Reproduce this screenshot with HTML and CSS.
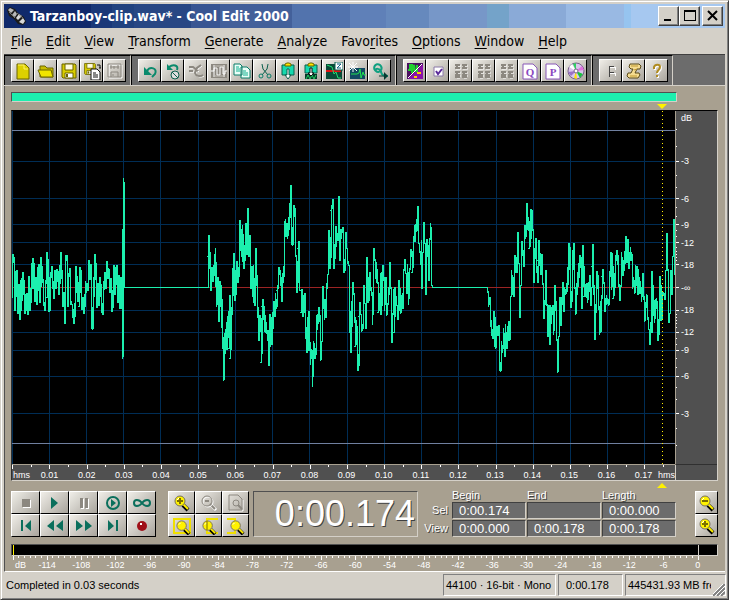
FILE: index.html
```html
<!DOCTYPE html>
<html lang="en">
<head>
  <meta charset="UTF-8" />
  <meta name="viewport" content="width=device-width, initial-scale=1" />
  <title>Tarzanboy-clip.wav* - Cool Edit 2000</title>
  <link rel="stylesheet" href="styles.css">
</head>
<body>

<!-- Shared shapes -->
<svg class="defs" width="0" height="0" aria-hidden="true">
  <symbol id="lens" viewBox="0 0 18 18">
    <path d="M10 11l5 5" stroke="#000" stroke-width="4"/>
    <path d="M10 10l5 5" stroke="#ffef00" stroke-width="2"/>
    <circle cx="7" cy="7" r="5" fill="#fff200" stroke="#777060" stroke-width="1"/>
    <path d="M4 6l2-2" stroke="#fff"/>
  </symbol>
  <symbol id="lens-off" viewBox="0 0 18 18">
    <path d="M11 11l5 5" stroke="#fff" stroke-width="3"/>
    <path d="M10 10l5 5" stroke="#8c8880" stroke-width="2"/>
    <circle cx="8" cy="8" r="5" fill="none" stroke="#fff"/>
    <circle cx="7" cy="7" r="5" fill="none" stroke="#8c8880"/>
  </symbol>
  <symbol id="grid-off" viewBox="0 0 18 18">
    <path d="M3 3h5M10 3h5M3 6h5M10 6h5M3 10h5M10 10h5M3 13h5M10 13h5M4 15h3M11 15h3" stroke="#fff" transform="translate(1 1)"/>
    <path d="M3 3h5M10 3h5M3 6h5M10 6h5M3 10h5M10 10h5M3 13h5M10 13h5M5 2v5M12 2v5M5 9v6M12 9v6M3 15h5M10 15h5" stroke="#8c8880" stroke-width="2"/>
  </symbol>
  <symbol id="floppy" viewBox="0 0 18 18">
    <path d="M2 2h13l1 1v13H3l-1-1z" fill="#d8cc00" stroke="#6b6500"/>
    <path d="M5 2h8v6H5z" fill="#fffce0" stroke="#6b6500"/>
    <path d="M5 11h8v5H5z" fill="#fff" stroke="#6b6500"/>
    <path d="M6 12h2v3H6z" fill="#6b6500"/>
  </symbol>
</svg>

<div class="window">

<!-- Title bar -->
<header class="titlebar">
  <svg class="app-icon" viewBox="0 0 20 20" aria-hidden="true">
    <path d="M1 4l3-3 5 2 3 4 6 4 2 5-3 3-5-1-4-5-5-3z" fill="#1c1c1c"/>
    <path d="M2 4l2-2 4 2-3 3zM6 9l3-4 2 3-2 3z" fill="#b8b8b8"/>
    <path d="M10 12l3-4 3 2-4 4zM13 16l4-4 2 3-2 3z" fill="#d8d8d8"/>
    <path d="M3 6l6 6M11 7l6 5" stroke="#777"/>
  </svg>
  <h1>Tarzanboy-clip.wav* - Cool Edit 2000</h1>
  <div class="window-buttons">
    <button aria-label="Minimize"><svg viewBox="0 0 16 14"><path d="M3 10h7v2H3z"/></svg></button>
    <button aria-label="Maximize"><svg viewBox="0 0 16 14"><path d="M2 1h12v11H2zM3 3v8h10V3z" fill-rule="evenodd"/></svg></button>
    <button class="close" aria-label="Close"><svg viewBox="0 0 16 14"><path d="M3 2l9 9M12 2l-9 9" stroke="#000" stroke-width="2"/></svg></button>
  </div>
</header>

<!-- Menu -->
<nav class="menu">
  <a href="#"><u>F</u>ile</a>
  <a href="#"><u>E</u>dit</a>
  <a href="#"><u>V</u>iew</a>
  <a href="#"><u>T</u>ransform</a>
  <a href="#"><u>G</u>enerate</a>
  <a href="#"><u>A</u>nalyze</a>
  <a href="#">Favo<u>r</u>ites</a>
  <a href="#"><u>O</u>ptions</a>
  <a href="#"><u>W</u>indow</a>
  <a href="#"><u>H</u>elp</a>
</nav>

<!-- Toolbars -->
<div class="toolbars">
  <div class="toolbar">
    <button aria-label="New"><svg viewBox="0 0 18 18"><path d="M3 2h8l4 4v11H3z" fill="#ddd000" stroke="#6b6500"/><path d="M4 3h6v4h4" fill="none" stroke="#fff36b"/></svg></button>
    <button aria-label="Open"><svg viewBox="0 0 18 18"><path d="M3 15V4h5l2 2h6v9z" fill="#c9bd00" stroke="#6b6500"/><path d="M1 8h13l2 7H4z" fill="#f0e400" stroke="#6b6500"/></svg></button>
    <button aria-label="Save"><svg viewBox="0 0 18 18"><use href="#floppy"/></svg></button>
    <button aria-label="Save copy"><svg viewBox="0 0 18 18"><use href="#floppy" width="14" height="14"/><path d="M8 7h6l3 3v8H8z" fill="#fff" stroke="#111"/><path d="M10 11h3M10 13h5M10 15h5" stroke="#111"/><path d="M14 3h3v3M16 6h2" fill="none" stroke="#111"/></svg></button>
    <button aria-label="Save selection" disabled><svg viewBox="0 0 18 18"><path d="M3 3h13v13H3z" fill="none" stroke="#fff"/><path d="M2 2h13v13H2zM5 15v-5h7v5M4 5h9M5 3v4M8 4v3M12 3v4M7 12v2" fill="none" stroke="#8c8880"/></svg></button>
  </div>
  <div class="toolbar">
    <button aria-label="Undo"><svg viewBox="0 0 18 18"><path d="M6 9c3-5 11-3 8 3l-3 3" fill="none" stroke="#0a8a6c" stroke-width="2"/><path d="M3 5v8h8z" fill="#0a8a6c"/></svg></button>
    <button aria-label="Disable undo"><svg viewBox="0 0 18 18"><path d="M5 5c4-3 10-2 8 3" fill="none" stroke="#0a8a6c" stroke-width="2"/><path d="M3 2v6h6z" fill="#0a8a6c"/><circle cx="11" cy="13" r="4" fill="#ddd" stroke="#0b5f4c"/><path d="M8 10l6 6" stroke="#0b5f4c"/></svg></button>
    <button aria-label="Repeat last command" disabled><svg viewBox="0 0 18 18"><path d="M2 5h4l5 4M2 9h4M14 3l-4 3-2 5c1 3 5 4 8 2" fill="none" stroke="#fff" transform="translate(1 1)"/><path d="M2 5h4l5 4M2 9h4M14 3l-4 3-2 5c1 3 5 4 8 2" fill="none" stroke="#8c8880" stroke-width="2"/></svg></button>
    <button aria-label="Trim" disabled><svg viewBox="0 0 18 18"><path d="M1 2h16v14H1z" fill="#8c8880"/><path d="M1 9h3V6h3v7h3V5h3v7h2V9h2M4 3v12M14 3v12" fill="none" stroke="#fff"/><path d="M5 4h9M5 14h9" fill="none" stroke="#c8c4bc"/></svg></button>
    <button aria-label="Copy"><svg viewBox="0 0 18 18"><path d="M1 2h6l2 2v9H1zM8 5h6l3 3v8H8z" fill="#eafff8" stroke="#0a7d68"/><path d="M3 5h3M3 7h4M3 9h4M10 9h3M10 11h5M10 13h5" stroke="#10b090"/></svg></button>
    <button aria-label="Cut"><svg viewBox="0 0 18 18"><path d="M6 2l1 5 5 6M12 2l-1 5-5 6" fill="none" stroke="#0b5f4c"/><circle cx="5" cy="14" r="2" fill="none" stroke="#0a7d68"/><circle cx="13" cy="14" r="2" fill="none" stroke="#0a7d68"/></svg></button>
    <button aria-label="Paste"><svg viewBox="0 0 18 18"><path d="M3 3h12v10H3z" fill="#15d9ae" stroke="#0b5f4c"/><path d="M6 4V2l2-1h2l2 1v2z" fill="#ffe600" stroke="#6b6500"/><path d="M8 7h2v6h2l-3 4-3-4h2z" fill="#fff" stroke="#0b5f4c"/></svg></button>
    <button aria-label="Paste to new"><svg viewBox="0 0 18 18"><path d="M3 3h12v8H3z" fill="#15d9ae" stroke="#0b5f4c"/><path d="M6 4V2l2-1h2l2 1v2z" fill="#ffe600" stroke="#6b6500"/><path d="M3 12h12v5H3z" fill="#06382b"/><path d="M4 17l2-4 2 4 2-4 2 4 2-4" fill="none" stroke="#20d060"/><path d="M8 6h2v5h2l-3 3-3-3h2z" fill="#fff" stroke="#111"/></svg></button>
    <button aria-label="Zero crossing"><svg viewBox="0 0 18 18"><path d="M1 2h16v15H1z" fill="#0b4a38"/><path d="M1 9h15" stroke="#e01010" stroke-width="2"/><path d="M2 3l5 2 2 7 2-2 2 6h3" fill="none" stroke="#20e070"/><path d="M10 0h8v8h-8z" fill="#fff" stroke="#0b5f4c"/><path d="M12 2h4l-4 4h4" fill="none" stroke="#106080"/></svg></button>
    <button aria-label="Find beats"><svg viewBox="0 0 18 18"><path d="M2 6h15v11H2z" fill="#124a62"/><path d="M3 12h6l2-1 1-4 1 9 2-6 1 3h2" fill="none" stroke="#20e050"/><path d="M5 0v10M0 5h10M1 1l8 8M9 1L1 9" stroke="#fff"/></svg></button>
    <button aria-label="Convert sample type"><svg viewBox="0 0 18 18"><path d="M6 10c-6-4-1-10 3-7 4 4-1 9-4 6-2-3 5-3 5 1 1 4 4 4 7 4" fill="none" stroke="#10a080" stroke-width="2"/><path d="M8 14h6" stroke="#063a30"/><path d="M13 10l4 4-4 4z" fill="#063a30"/></svg></button>
  </div>
  <div class="toolbar">
    <button aria-label="Toggle spectral view"><svg viewBox="0 0 18 18"><path d="M1 1h16v16H1z" fill="#4a1060"/><path d="M17 2v15H2z" fill="#8a14a8"/><path d="M2 8h2V3h2v8l2-8 1 6h2V3" fill="none" stroke="#20d030" stroke-width="2"/><path d="M2 16L16 2" stroke="#fff"/><path d="M8 15h3M11 11h4" stroke="#ffd000" stroke-width="2"/></svg></button>
    <button aria-label="Settings"><svg viewBox="0 0 18 18"><path d="M5 5h9v9H5z" fill="#fff" stroke="#8a78a8"/><path d="M7 9l2 3 4-5" fill="none" stroke="#5a2a9a" stroke-width="2"/></svg></button>
    <button aria-label="Mixers" disabled><svg viewBox="0 0 18 18"><use href="#grid-off"/></svg></button>
    <button aria-label="Levels" disabled><svg viewBox="0 0 18 18"><use href="#grid-off"/></svg></button>
    <button aria-label="Synth" disabled><svg viewBox="0 0 18 18"><use href="#grid-off"/></svg></button>
    <button aria-label="Cue list"><svg viewBox="0 0 18 18"><path d="M2 2h10l4 4v11H2z" fill="#fff" stroke="#8a58b8"/><text x="9" y="14" class="glyph">Q</text></svg></button>
    <button aria-label="Play list"><svg viewBox="0 0 18 18"><path d="M2 2h10l4 4v11H2z" fill="#fff" stroke="#8a58b8"/><text x="9" y="14" class="glyph">P</text></svg></button>
    <button aria-label="CD player"><svg viewBox="0 0 18 18"><circle cx="9" cy="9" r="8" fill="#d9c4ec" stroke="#77608a"/><path d="M9 9L2 5l3-3z" fill="#fff"/><path d="M9 9l7 3-3 4z" fill="#18c040"/><path d="M9 9l6-5 2 4z" fill="#e070e0"/><path d="M9 9l1 8-3-1z" fill="#ffe600"/><path d="M9 9l-8 1 3 4z" fill="#9a70c8"/><path d="M9 9l-3-7 3-1z" fill="#30d060"/><circle cx="9" cy="9" r="2" fill="#fff" stroke="#77608a"/></svg></button>
  </div>
  <div class="toolbar">
    <button aria-label="Frequency analysis"><svg viewBox="0 0 18 18" shape-rendering="crispEdges"><path d="M8 5h5v3M8 11h5v3" fill="none" stroke="#fff"/><path d="M7 15V4h5M7 10h5" fill="none" stroke="#444"/></svg></button>
    <button aria-label="Scripts"><svg viewBox="0 0 18 18"><path d="M5 2h9l2 2-1 3h-3l-2 4h4l1 2-2 3H4l-2-2 1-3h3l2-4H6L4 5z" fill="#f5dc90" stroke="#5a4a18"/><path d="M6 4h7M5 14h7M9 8l3-1" stroke="#c09a30"/></svg></button>
    <button aria-label="Help"><svg viewBox="0 0 18 18"><path d="M6 7V5c1-3 6-3 6 0 0 3-3 3-3 6M9 13v2" fill="none" stroke="#fff" stroke-width="2" transform="translate(1 1)"/><path d="M6 7V5c1-3 6-3 6 0 0 3-3 3-3 6M9 13v2" fill="none" stroke="#b08c20" stroke-width="2"/></svg></button>
  </div>
</div>

<main>
  <div class="overview"><div class="overview-bar"></div></div>

  <!-- Waveform -->
  <section class="wave">
    <svg class="plot" viewBox="36 -147 1989 1059" preserveAspectRatio="none" role="img" aria-label="Waveform">
      <path class="grid" d="M38 -147V912M149 -147V912M260 -147V912M371 -147V912M482 -147V912M596 -147V912M707 -147V912M818 -147V912M929 -147V912M1043 -147V912M1154 -147V912M1265 -147V912M1376 -147V912M1490 -147V912M1601 -147V912M1712 -147V912M1823 -147V912M1934 -147V912"/>
      <path class="grid" d="M36 4H2025M36 115H2025M36 193H2025M36 247H2025M36 313H2025M36 451H2025M36 517H2025M36 571H2025M36 649H2025M36 760H2025"/>
      <path class="limit" d="M36 -89H2025M36 850H2025"/>
      <path class="zero" d="M36 382H2025"/>
      <polyline class="signal" points="37,413 37,316 40,282 43,310 43,378 46,452 49,334 52,330 52,455 55,461 58,372 61,479 61,360 64,452 67,354 67,422 70,337 73,404 76,461 79,402 79,452 82,400 85,464 88,348 91,452 91,390 94,430 97,310 97,358 100,294 103,386 103,310 106,425 109,352 112,434 115,320 118,312 118,410 121,428 124,292 127,370 130,358 130,420 136,452 136,376 139,362 142,276 142,413 145,298 148,455 151,450 151,360 154,338 157,318 157,386 160,362 163,416 166,330 169,388 172,326 175,345 178,404 181,316 184,276 184,356 187,330 187,404 190,440 193,396 196,491 196,312 199,286 202,286 202,424 205,440 205,358 208,338 211,324 211,416 214,434 217,432 220,474 223,491 226,430 226,318 229,322 232,400 235,426 238,366 238,440 241,320 244,346 244,430 247,450 250,412 253,461 256,402 256,364 259,400 262,370 265,392 265,328 268,300 271,360 274,312 274,404 277,506 280,506 280,350 283,410 283,290 286,282 289,360 289,442 292,442 295,370 298,438 301,352 304,412 307,458 310,464 310,362 313,390 316,336 319,386 322,304 325,358 328,328 328,386 331,400 334,354 337,455 340,422 340,328 343,316 346,406 349,322 352,316 352,390 355,430 358,346 361,446 364,350 367,446 367,206 367,596 370,584 370,54 373,90 373,382 625,382
        625,290 628,226 628,326 631,276 631,360 634,392 637,322 640,365 643,315 646,282 646,264 649,382 649,442 652,350 655,434 655,352 658,485 661,362 664,400 664,505 667,416 667,566 670,530 670,662 673,654 673,520 676,583 676,506 679,540 679,486 682,570 685,470 688,452 688,566 691,404 691,596 694,520 694,440 697,466 697,324 700,408 703,280 706,422 709,352 709,406 712,304 715,368 718,320 718,258 721,180 724,274 724,208 727,290 727,196 730,305 730,222 733,326 736,256 736,302 739,190 742,286 742,180 745,144 745,202 748,292 751,226 751,374 754,388 757,318 760,410 760,316 763,428 763,356 766,438 769,264 769,345 772,346 772,474 775,442 775,520 778,542 781,466 784,488 784,608 787,530 787,440 790,418 790,480 793,438 793,516 796,466 799,520 802,512 802,544 805,510 805,618 808,614 811,462 811,534 814,470 817,554 817,460 820,508 820,458 823,424 826,470 826,400 829,448 832,430 832,392 835,374 835,342 838,322 841,345 841,378 844,350 844,424 847,424 847,338 850,370 853,318 853,184 856,216 856,178 859,232 862,190 862,238 865,210 865,172 868,210 868,130 871,174 871,102 874,75 874,172 877,254 880,254 880,188 883,136 886,158 886,286 889,290 889,386 892,398 892,304 895,370 895,266 898,244 898,390 904,392 904,458 907,386 910,470 910,404 913,458 916,398 916,510 919,538 919,500 922,578 925,470 925,570 928,452 928,572 931,546 931,614 934,568 937,574 937,680 940,596 940,542 943,594 943,550 946,598 949,564 949,466 952,510 952,462 955,492 955,446 958,442 958,486 961,466 961,604 964,588 964,544 967,546 967,400 970,378 970,448 973,436 973,480 976,416 979,474 979,396 982,370 982,344 985,342 985,244 988,210 988,270 991,328 994,230 994,152 1000,118 1000,210 1003,328 1003,270 1006,296 1009,198 1009,256 1012,220 1015,242 1015,120 1018,108 1018,196 1021,304 1021,254 1024,206 1024,224 1030,202 1030,274 1033,338 1036,322 1036,254 1039,216 1039,264 1042,266 1042,310 1045,304 1045,316 1048,318 1048,418 1051,520 1054,578 1054,542 1057,424 1060,366 1060,400 1063,400 1063,490 1066,470 1066,560 1069,480 1069,554 1072,498 1072,556 1075,634 1078,592 1078,470 1081,426 1081,462 1084,464 1084,516 1087,492 1087,514 1090,496 1090,420 1093,374 1093,430 1096,430 1096,504 1099,504 1099,310 1102,290 1102,352 1105,428 1105,352 1108,424 1108,340 1111,336 1111,374 1117,408 1117,496 1120,406 1120,276 1123,264 1123,302 1126,296 1126,334 1129,356 1129,306 1132,368 1135,370 1135,458 1138,440 1138,400 1141,430 1141,340 1144,464 1144,336 1147,438 1147,380 1150,314 1150,362 1153,360 1153,454 1156,350 1156,434 1159,352 1159,464 1162,464 1162,430 1165,436 1165,380 1168,406 1168,320 1171,306 1171,384 1174,384 1174,520 1177,548 1177,462 1180,464 1180,424 1183,386 1183,518 1186,382 1186,434 1189,408 1189,436 1192,436 1192,464 1195,480 1195,446 1198,360 1198,454 1201,384 1201,454 1204,460 1204,404 1207,446 1207,398 1210,448 1210,338 1213,326 1213,300 1216,298 1216,340 1219,340 1219,400 1222,398 1222,312 1225,384 1225,436 1228,380 1228,328 1231,326 1231,268 1234,268 1234,290 1237,274 1237,338 1240,296 1240,230 1243,232 1243,196 1246,246 1246,192 1249,216 1249,178 1252,214 1252,144 1255,138 1255,250 1258,252 1258,276 1261,276 1261,306 1264,314 1264,240 1267,386 1267,278 1270,276 1270,216 1273,186 1273,250 1276,250 1276,374 1279,406 1279,294 1282,238 1285,290 1285,362 1288,360 1288,238 1291,236 1291,190 1294,226 1294,376 1297,378 1297,382
        1462,382 1462,395 1465,396 1465,440 1471,412 1471,502 1474,480 1474,514 1477,528 1477,508 1480,536 1483,454 1483,562 1486,470 1486,566 1489,560 1489,502 1492,498 1492,518 1495,528 1498,494 1498,590 1501,634 1504,628 1504,544 1507,578 1507,556 1510,568 1510,504 1513,548 1516,590 1516,492 1519,560 1519,522 1522,566 1525,498 1525,536 1528,484 1528,544 1531,530 1531,412 1534,408 1534,330 1537,370 1537,404 1540,352 1540,408 1543,408 1543,314 1546,286 1549,338 1549,290 1552,338 1552,220 1555,216 1555,310 1558,312 1558,472 1561,472 1561,376 1564,376 1564,264 1567,242 1567,288 1570,270 1570,316 1573,320 1573,220 1576,194 1576,236 1579,204 1579,230 1582,128 1582,210 1585,172 1585,214 1588,182 1588,266 1591,250 1591,212 1594,146 1594,236 1597,150 1597,208 1600,212 1600,348 1603,370 1603,264 1606,298 1609,234 1609,340 1612,318 1612,368 1615,366 1615,302 1618,240 1618,310 1621,316 1621,280 1624,344 1627,282 1627,372 1630,370 1630,474 1633,474 1633,420 1636,436 1639,330 1639,434 1642,436 1642,518 1645,530 1645,460 1648,434 1648,520 1651,554 1651,436 1654,492 1654,440 1657,464 1660,434 1660,524 1663,494 1666,374 1666,410 1669,450 1669,540 1672,538 1672,638 1675,630 1675,530 1678,528 1678,430 1681,410 1681,434 1684,498 1684,412 1687,436 1690,366 1690,400 1693,456 1693,380 1696,404 1699,400 1699,368 1702,396 1702,366 1705,320 1705,374 1708,248 1711,290 1711,442 1714,442 1714,394 1717,426 1717,310 1720,270 1720,330 1723,248 1723,380 1726,386 1726,464 1729,460 1729,370 1732,406 1732,336 1735,380 1738,308 1738,346 1741,286 1741,320 1744,290 1744,444 1747,444 1750,256 1750,382 1753,318 1753,410 1756,388 1756,412 1759,372 1759,414 1762,370 1762,430 1765,398 1765,366 1768,396 1768,366 1771,346 1771,424 1774,438 1774,382 1777,382 1777,320 1780,252 1780,404 1783,374 1783,480 1786,540 1786,432 1789,458 1789,418 1792,334 1792,374 1795,344 1795,430 1798,450 1798,524 1801,512 1801,424 1804,516 1804,424 1807,404 1807,350 1810,328 1810,370 1813,366 1813,450 1816,456 1816,414 1819,434 1819,406 1822,432 1825,416 1825,434 1828,434 1828,360 1831,334 1834,276 1834,390 1837,340 1837,280 1840,382 1840,416 1843,374 1843,408 1846,340 1846,306 1849,284 1849,304 1852,270 1852,314 1855,286 1855,370 1858,380 1858,412 1861,422 1861,386 1864,374 1864,276 1867,320 1867,290 1870,348 1873,300 1873,334 1876,274 1876,294 1879,228 1879,270 1882,308 1882,256 1885,238 1885,262 1888,326 1888,276 1891,302 1891,262 1894,304 1894,280 1897,288 1897,386 1900,350 1900,382 1903,360 1903,398 1906,398 1906,316 1909,352 1909,318 1912,378 1912,318 1915,404 1915,326 1918,402 1918,368 1921,364 1921,402 1924,380 1924,426 1930,338 1930,402 1933,420 1933,478 1936,484 1936,452 1939,426 1939,402 1942,410 1942,470 1945,478 1945,506 1948,510 1951,554 1951,486 1954,520 1957,332 1957,520 1960,374 1960,410 1963,436 1963,490 1966,450 1966,416 1969,446 1969,414 1972,444 1975,544 1978,490 1978,382 1981,348 1981,402 1984,482 1984,374 1987,480 1987,410 1990,396 1996,420 1996,334 1999,330 1999,220 2002,222 2002,330 2005,330 2005,480 2008,488 2008,462 2011,460 2011,370 2014,330 2014,390 2017,406 2017,290 2020,290 2020,196 2023,178 2023,344"/>
      <path class="cursor" d="M1988 -147V912"/>
    </svg>
    <svg class="level-ruler" id="levelRuler" role="img" aria-label="Level in dB">
      <text x="5" y="10">dB</text>
    </svg>
    <div class="time-ruler">
      <svg class="ticks" id="timeTicks" aria-hidden="true"></svg>
      <div class="time-labels" id="timeLabels"><span class="unit">hms</span></div>
    </div>
    <div class="corner"></div>
    <i class="marker marker-top"></i>
    <i class="marker marker-bottom"></i>
  </section>

  <!-- Transport, zoom and time -->
  <section class="controls">
    <div class="transport">
      <button aria-label="Stop" disabled><svg viewBox="0 0 18 18"><path d="M6 6h8v8H6z" fill="#fff"/><path d="M5 5h8v8H5z" fill="#8c8880"/></svg></button>
      <button aria-label="Play"><svg viewBox="0 0 18 18"><path d="M5 3l7 6-7 6z" fill="#0a6f5c"/></svg></button>
      <button aria-label="Pause" disabled><svg viewBox="0 0 18 18"><path d="M6 5h3v10H6zM11 5h3v10h-3z" fill="#fff"/><path d="M5 4h3v10H5zM10 4h3v10h-3z" fill="#8c8880"/></svg></button>
      <button aria-label="Play to end"><svg viewBox="0 0 18 18"><circle cx="9" cy="9" r="6" fill="none" stroke="#0a6f5c" stroke-width="2"/><path d="M7 5l5 4-5 4z" fill="#0a6f5c"/></svg></button>
      <button aria-label="Loop"><svg viewBox="0 0 18 18"><path d="M9 9C6 5 1 5 1 9s5 4 8 0c3-4 8-4 8 0s-5 4-8 0z" fill="none" stroke="#0a6f5c" stroke-width="2"/></svg></button>
      <button aria-label="Go to start"><svg viewBox="0 0 18 18"><path d="M4 3h2v11H4zM14 3v11L8 9z" fill="#0a6f5c"/></svg></button>
      <button aria-label="Rewind"><svg viewBox="0 0 18 18"><path d="M8 3v11L1 9zM17 3v11l-7-5z" fill="#0a6f5c"/></svg></button>
      <button aria-label="Fast forward"><svg viewBox="0 0 18 18"><path d="M1 3v11l7-5zM10 3v11l7-5z" fill="#0a6f5c"/></svg></button>
      <button aria-label="Go to end"><svg viewBox="0 0 18 18"><path d="M12 3h2v11h-2zM4 3v11l6-5z" fill="#0a6f5c"/></svg></button>
      <button aria-label="Record"><svg viewBox="0 0 18 18"><circle cx="9" cy="9" r="5" fill="#a01018"/><path d="M7 7h2" stroke="#fff" stroke-width="2"/></svg></button>
    </div>
    <div class="zoom">
      <button aria-label="Zoom in"><svg viewBox="0 0 18 18"><use href="#lens"/><path d="M4 7h6M7 4v6" stroke="#7a6e00" stroke-width="2"/></svg></button>
      <button aria-label="Zoom out" disabled><svg viewBox="0 0 18 18"><use href="#lens-off"/><path d="M5 7h4" stroke="#8c8880" stroke-width="2"/></svg></button>
      <button aria-label="Zoom full" disabled><svg viewBox="0 0 18 18"><path d="M3 17h13V6" fill="none" stroke="#fff"/><path d="M2 1h9l4 4v11H2z" fill="none" stroke="#8c8880"/><circle cx="9" cy="9" r="3" fill="none" stroke="#8c8880"/><path d="M11 11l4 4" stroke="#8c8880" stroke-width="2"/></svg></button>
      <button aria-label="Zoom to selection"><svg viewBox="0 0 18 18"><path d="M1 2h16v14H1z" fill="none" stroke="#f0e000" stroke-width="2"/><use href="#lens" x="2" y="2" width="17" height="17"/></svg></button>
      <button aria-label="Zoom to left edge"><svg viewBox="0 0 18 18"><path d="M18 2H7v14h11" fill="none" stroke="#f0e000" stroke-width="2"/><use href="#lens" x="1" y="2" width="17" height="17"/><path d="M7 4v9" stroke="#7a6e00"/></svg></button>
      <button aria-label="Zoom to right edge"><svg viewBox="0 0 18 18"><path d="M0 2h8v14H0" fill="none" stroke="#f0e000" stroke-width="2"/><use href="#lens" x="2" y="2" width="17" height="17"/></svg></button>
    </div>
    <output class="clock">0:00.174</output>
    <div class="range">
      <span></span>
      <span class="head">Begin</span>
      <span class="head">End</span>
      <span class="head">Length</span>
      <span class="side">Sel</span>
      <input type="text" value="0:00.174" aria-label="Selection begin">
      <input type="text" value="" aria-label="Selection end">
      <input type="text" value="0:00.000" aria-label="Selection length">
      <span class="side">View</span>
      <input type="text" value="0:00.000" aria-label="View begin">
      <input type="text" value="0:00.178" aria-label="View end">
      <input type="text" value="0:00.178" aria-label="View length">
    </div>
    <div class="vzoom">
      <button aria-label="Zoom out vertically"><svg viewBox="0 0 18 18"><use href="#lens"/><path d="M4 7h6" stroke="#7a6e00" stroke-width="2"/></svg></button>
      <button aria-label="Zoom in vertically"><svg viewBox="0 0 18 18"><use href="#lens"/><path d="M4 7h6M7 4v6" stroke="#7a6e00" stroke-width="2"/></svg></button>
    </div>
  </section>

  <!-- Level meter -->
  <section class="meter">
    <div class="meter-box"><div class="meter-level"></div><div class="meter-clip"></div></div>
    <svg class="ticks" id="meterTicks" aria-hidden="true"></svg>
    <div class="meter-labels" id="meterLabels"><span class="unit">dB</span></div>
  </section>
</main>

<!-- Status bar -->
<footer>
  <span class="message">Completed in 0.03 seconds</span>
  <span class="pane format">44100 · 16-bit · Mono</span>
  <span class="pane length">0:00.178</span>
  <span class="pane disk">445431.93 MB free</span>
  <svg class="grip" viewBox="0 0 12 12" aria-hidden="true"><path d="M0 12L12 0M4 12l8-8M8 12l4-4" stroke="#808080" stroke-width="2"/><path d="M-1 11L11-1M3 11l9-9M7 11l5-5" stroke="#fff"/></svg>
</footer>

</div>

<script>
  function addSvg(parent, name, attrs, text) {
    const el = document.createElementNS("http://www.w3.org/2000/svg", name);
    for (const key in attrs) el.setAttribute(key, attrs[key]);
    if (text) el.textContent = text;
    parent.appendChild(el);
  }

  function addLabel(parent, text, cls) {
    const el = document.createElement("span");
    el.textContent = text;
    if (cls) el.className = cls;
    parent.appendChild(el);
  }

  // distance from the zero line, in percent of the ruler height
  const levels = { "-3": 35.7, "-6": 25.2, "-9": 17.8, "-12": 12.7, "-18": 6.5 };
  const minor = [44.8, 40, 31.8, 28.4, 22.7, 20.1, 16.2, 14.5, 11.4, 10.2, 9.3, 8.5, 7.6];
  const levelRuler = document.getElementById("levelRuler");

  function addLevel(text, pos) {
    addSvg(levelRuler, "line", { x1: 0, x2: 3, y1: pos + "%", y2: pos + "%" });
    addSvg(levelRuler, "text", { x: 5, y: pos + "%", dy: 3 }, text);
  }

  for (const side of [-1, 1]) {
    for (const name in levels) addLevel(name, 50 + side * levels[name]);
    for (const d of minor) {
      addSvg(levelRuler, "line", { x1: 0, x2: 1, y1: 50 + side * d + "%", y2: 50 + side * d + "%" });
    }
  }
  addLevel("-∞", 50);

  // time ruler, half steps of 0.01 s
  const step = 5.61;
  for (let i = 0; i < 36; i++) {
    const x = i * step / 2 + 0.1 + "%";
    addSvg(document.getElementById("timeTicks"), "line", { x1: x, x2: x, y1: 0, y2: i % 2 ? 2 : 4 });
  }
  for (let i = 1; i <= 17; i++) {
    addLabel(document.getElementById("timeLabels"), "0." + String(i).padStart(2, "0"));
  }
  addLabel(document.getElementById("timeLabels"), "hms", "unit-end");

  // meter, one tick per dB
  for (let db = 0; db <= 120; db++) {
    const x = db / 1.2 + "%";
    addSvg(document.getElementById("meterTicks"), "line", { x1: x, x2: x, y1: 0, y2: db % 6 ? 2 : 4 });
  }
  for (let db = -114; db <= 0; db += 6) {
    addLabel(document.getElementById("meterLabels"), String(db));
  }
</script>

</body>
</html>
```

FILE: styles.css
```css
* {
  box-sizing: border-box;
}

html, body {
  margin: 0;
  padding: 0;
  height: 100%;
  font-family: "Liberation Sans", Arial, sans-serif;
  font-size: 11px;
  color: #000;
}

.defs {
  position: absolute;
}

.window {
  height: 100vh;
  min-height: 500px;
  display: flex;
  flex-direction: column;
  padding: 3px 2px 2px 3px;
  background-color: #d4d0c8;
  border: 1px solid;
  border-color: #d4d0c8 #404040 #404040 #d4d0c8;
  box-shadow: inset 1px 1px #fff, inset -1px -1px #808080;
  overflow: hidden;
}

/* title bar */
.titlebar {
  height: 24px;
  display: flex;
  align-items: center;
  margin-right: 1px;
  padding: 0 2px;
  color: #fff;
  background: linear-gradient(to right,
    #10296b 0 12%, #1a3878 12% 15%, #21427f 15% 18%, #284784 18% 26%,
    #385592 26% 30%, #43609a 30% 40%, #5273ad 40% 48%, #5f80b8 48% 53%,
    #6689bd 53% 59%, #7797c8 59% 67%, #74a3c9 67% 70%, #8aaad7 70% 78%,
    #99b9e3 78% 86%, #96c4ef 86% 87%, #a6c8f0 87%);
}

.app-icon {
  width: 20px;
  height: 20px;
  margin-right: 4px;
}

h1 {
  flex: 1;
  margin: 0;
  font-family: "DejaVu Sans Condensed", "Noto Sans", sans-serif;
  font-size: 14px;
  font-weight: bold;
  line-height: 24px;
  white-space: nowrap;
}

.window-buttons {
  display: flex;
}

.window-buttons button {
  width: 21px;
  height: 20px;
  padding: 0;
  display: flex;
  align-items: center;
  justify-content: center;
  background-color: #d4d0c8;
  border: 1px solid;
  border-color: #fff #404040 #404040 #fff;
  box-shadow: inset -1px -1px #808080;
}

.window-buttons svg {
  width: 16px;
  height: 14px;
}

.window-buttons .close {
  margin-left: 2px;
}

/* menu */
.menu {
  height: 26px;
  display: flex;
  align-items: center;
  gap: 14px;
  padding: 0 7px;
  font-family: "DejaVu Sans Condensed", "Noto Sans", sans-serif;
  font-size: 14px;
}

.menu a {
  color: #000;
  text-decoration: none;
}

.menu u {
  text-underline-offset: 2px;
}

/* toolbars */
.toolbars {
  height: 32px;
  display: flex;
  margin-right: 1px;
  background-color: #6c6c6c;
  border-top: 1px solid #404040;
  border-bottom: 1px solid #d4d0c8;
}

.toolbar {
  display: flex;
  padding: 3px 4px 3px 6px;
  border-top: 1px solid #000;
  border-left: 1px solid #000;
  border-right: 1px solid #d4d0c8;
}

.toolbar button, .controls button {
  padding: 0;
  display: flex;
  align-items: center;
  justify-content: center;
  background: linear-gradient(135deg, #f0eee8, #a8a49c);
  border: 1px solid;
  border-color: #fff #000 #000 #fff;
}

.toolbar button {
  width: 23px;
  height: 23px;
}

.toolbar svg, .controls svg {
  width: 18px;
  height: 18px;
  fill: none;
}

.glyph {
  font: bold 11px "Liberation Serif", serif;
  fill: #8a48c0;
  text-anchor: middle;
}

main {
  flex: 1;
  min-height: 0;
  display: flex;
  flex-direction: column;
  margin-right: 1px;
  padding: 6px 7px 0 6px;
  background-color: #a8a090;
  border-left: 1px solid #505050;
  border-bottom: 1px solid #fff;
}

.overview {
  margin-right: 41px;
  height: 10px;
  border: 1px solid;
  border-color: #505050 #d4d0c8 #d4d0c8 #505050;
}

.overview-bar {
  height: 8px;
  background-color: #1cefae;
}

/* waveform */
.wave {
  flex: 1;
  min-height: 0;
  position: relative;
  display: grid;
  grid-template-columns: 1fr 42px;
  grid-template-rows: 1fr 15px;
  margin: 8px 0 10px;
  background-color: #505050;
  border: 1px solid;
  border-color: #000 #d4d0c8 #d4d0c8 #303030;
}

.plot {
  width: 100%;
  height: 100%;
  min-height: 0;
  background-color: #000;
  border-bottom: 1px solid #a8a090;
}

.plot path, .plot polyline {
  fill: none;
  stroke-width: 1px;
  vector-effect: non-scaling-stroke;
  shape-rendering: crispEdges;
}

.plot .grid {
  stroke: #002d55;
}

.plot .limit {
  stroke: #7080a0;
}

.plot .zero {
  stroke: #9c2424;
}

.plot .signal {
  stroke: #1cefae;
  stroke-width: 5px;
  stroke-linejoin: bevel;
  vector-effect: none;
}

.plot .cursor {
  stroke: #ffee00;
  stroke-dasharray: 1 3;
}

.level-ruler {
  width: 100%;
  height: 100%;
  min-height: 0;
  font-size: 9px;
  fill: #fff;
  border-left: 1px solid #a8a090;
  border-bottom: 1px solid #303030;
}

.level-ruler line, .ticks line {
  stroke: #fff;
  shape-rendering: crispEdges;
}

.time-ruler {
  min-width: 0;
  color: #fff;
}

.ticks {
  display: block;
  width: 100%;
  height: 4px;
  overflow: visible;
}

.time-labels, .meter-labels {
  display: flex;
  font-size: 9px;
  line-height: 12px;
  text-align: center;
  white-space: nowrap;
}

.time-labels span, .meter-labels span {
  flex: 1 1 0;
  min-width: 0;
}

.time-labels .unit, .time-labels .unit-end, .meter-labels .unit {
  flex: 0 0 19px;
}

.time-labels .unit-end {
  flex-basis: 13px;
  display: flex;
  justify-content: flex-end;
}

.corner {
  border-left: 1px solid #d4d0c8;
}

.marker {
  position: absolute;
  left: 92%;
  margin-left: -4px;
  border: 5px solid transparent;
}

.marker-top {
  top: -7px;
  border-top-color: #fff200;
  border-bottom: 0;
}

.marker-bottom {
  bottom: -8px;
  border-bottom-color: #fff200;
  border-top: 0;
}

/* transport, zoom and time */
.controls {
  display: flex;
  height: 46px;
}

.transport {
  display: grid;
  grid-template-columns: repeat(5, 29px);
  grid-template-rows: 23px 23px;
}

.zoom {
  display: grid;
  grid-template-columns: repeat(3, 27px);
  grid-template-rows: 23px 23px;
  margin: 0 4px 0 12px;
}

.vzoom {
  display: grid;
  grid-template-columns: 23px;
  grid-template-rows: 23px 23px;
  margin-left: auto;
}

.clock {
  flex: 1 1 166px;
  max-width: 200px;
  padding-right: 2px;
  font-size: 36px;
  line-height: 44px;
  text-align: right;
  color: #fff;
  text-shadow: 1px 1px #404040;
  border: 1px solid;
  border-color: #505050 #d4d0c8 #d4d0c8 #505050;
}

.range {
  display: grid;
  grid-template-columns: 29px repeat(3, 74px);
  grid-template-rows: 10px 17px 17px;
  gap: 1px;
  margin: 0 19px 0 4px;
  color: #fff;
  text-shadow: 1px 1px #404040;
}

.head {
  line-height: 8px;
}

.side {
  line-height: 17px;
  text-align: right;
  padding-right: 3px;
}

.range input {
  width: 100%;
  min-width: 0;
  height: 17px;
  margin: 0;
  padding: 0 6px;
  font-family: inherit;
  font-size: 13px;
  color: #fff;
  background-color: #6c6c6c;
  border: 1px solid;
  border-color: #404040 #d4d0c8 #d4d0c8 #404040;
  border-radius: 0;
}

/* meter */
.meter {
  margin-top: 7px;
  color: #fff;
}

.meter-box {
  display: flex;
  height: 12px;
  background-color: #000;
  border: 1px solid;
  border-color: #505050 #d4d0c8 #d4d0c8 #505050;
}

.meter-level {
  flex: 1;
  margin-left: 1px;
  border-left: 1px solid #fff200;
}

.meter-clip {
  width: 19px;
  border-left: 1px solid #d4d0c8;
}

.meter .ticks {
  width: calc(100% - 22px);
  margin-left: 2px;
}

.meter-labels {
  margin-right: 3px;
  line-height: 11px;
}

/* status bar */
footer {
  height: 25px;
  display: flex;
  gap: 2px;
  padding-top: 2px;
  position: relative;
  line-height: 22px;
  white-space: nowrap;
}

.message {
  flex: 1;
  padding-left: 2px;
}

.pane {
  height: 22px;
  padding: 0 2px;
  overflow: hidden;
  border: 1px solid;
  border-color: #808080 #fff #fff #808080;
  line-height: 20px;
}

.format {
  width: 113px;
}

.length {
  width: 65px;
  padding-left: 7px;
}

.disk {
  width: 101px;
  padding-right: 14px;
  overflow: clip;
  overflow-clip-margin: content-box;
}

.grip {
  position: absolute;
  right: 1px;
  bottom: 1px;
  width: 12px;
  height: 12px;
}
```
